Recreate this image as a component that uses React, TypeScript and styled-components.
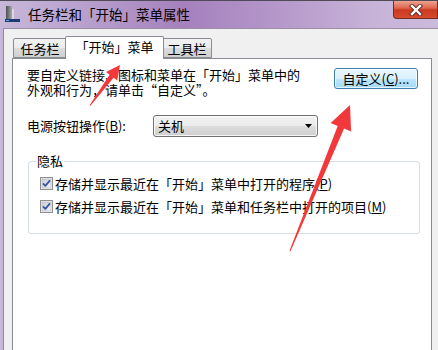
import React from "react";
import styled, { createGlobalStyle } from "styled-components";

const GlobalStyle = createGlobalStyle`
  html, body {
    margin: 0;
    padding: 0;
    overflow: hidden;
    background: #ffffff;
  }
  body {
    font-family: "Noto Sans CJK SC", "Liberation Sans", sans-serif;
    color: #000;
  }
`;

const Window = styled.div`
  position: relative;
  width: 438px;
  height: 350px;
  box-sizing: border-box;
  overflow: hidden;
  display: flex;
  flex-direction: column;
  border-top: 1px solid #4f4a55;
  background: linear-gradient(
    90deg,
    #c7b7d9 0%,
    #b9a2ce 18%,
    #a580bd 42%,
    #b496c9 62%,
    #c7b3d8 85%,
    #cbbadc 100%
  );
`;

const TitleBar = styled.div`
  height: 27px;
  flex-shrink: 0;
  display: flex;
  align-items: flex-start;
`;

const AppIcon = styled.svg`
  margin: 4px 0 0 4px;
  flex-shrink: 0;
`;

const Title = styled.span`
  margin-left: 7px;
  font-size: 13.5px;
  line-height: 27px;
  color: #000;
  white-space: nowrap;
`;

const CloseButton = styled.div`
  margin-left: auto;
  width: 45px;
  height: 18px;
  box-sizing: border-box;
  border: 1px solid #6e2f27;
  border-top: none;
  border-radius: 0 0 0 4px;
  background: linear-gradient(180deg, #eba393 0%, #e0654c 42%, #c93a20 52%, #d84a2c 100%);
  display: flex;
  align-items: center;
  justify-content: center;
`;

const Body = styled.div`
  flex: 1;
  margin-left: 3px;
  border-left: 1px solid #8d8d8d;
  border-top: 1px solid #9b8ea7;
  background: #f0f0f0;
  padding: 7px 6px 0 8px;
  display: flex;
  flex-direction: column;
`;

const TabStrip = styled.div`
  height: 22px;
  padding-left: 1px;
  display: flex;
  align-items: flex-end;
  position: relative;
  z-index: 1;
`;

const Tab = styled.div<{ $active?: boolean; $w: number }>`
  width: ${(p) => p.$w}px;
  height: ${(p) => (p.$active ? 23 : 20)}px;
  box-sizing: border-box;
  margin: ${(p) => (p.$active ? "0 -2px -1px -2px" : "0")};
  border: 1px solid #898c95;
  border-bottom: ${(p) => (p.$active ? "none" : "1px solid #898c95")};
  border-radius: 2px 2px 0 0;
  background: ${(p) =>
    p.$active ? "#ffffff" : "linear-gradient(180deg, #f2f2f2 0%, #ebebeb 50%, #dddddd 51%, #cfcfcf 100%)"};
  position: relative;
  z-index: ${(p) => (p.$active ? 2 : 0)};
  font-size: 13px;
  line-height: ${(p) => (p.$active ? 20 : 19)}px;
  text-align: center;
  white-space: nowrap;
`;

const Panel = styled.div`
  flex: 1;
  background: #ffffff;
  border: 1px solid #898c95;
  border-bottom: none;
  padding: 9px 13px 0 14px;
  display: flex;
  flex-direction: column;
`;

const IntroRow = styled.div`
  display: flex;
  justify-content: space-between;
  align-items: flex-start;
`;

const Intro = styled.p`
  margin: -1px 0 0 0;
  font-size: 13px;
  line-height: 15px;
  white-space: nowrap;
`;

const PushButton = styled.div`
  width: 84px;
  height: 21px;
  box-sizing: border-box;
  border: 1px solid #3c7fb1;
  border-radius: 3px;
  box-shadow: inset 0 0 0 1px rgba(255, 255, 255, 0.7);
  background: linear-gradient(180deg, #eaf6fd 0%, #d9f0fc 50%, #bee6fd 51%, #a7d9f5 100%);
  font-size: 13px;
  line-height: 19px;
  text-align: center;
  white-space: nowrap;
`;

const PowerRow = styled.div`
  margin-top: 18px;
  display: flex;
  align-items: center;
`;

const FieldLabel = styled.span`
  width: 126px;
  font-size: 13px;
  line-height: 22px;
  white-space: nowrap;
`;

const Mnemonic = styled.span`
  text-decoration: underline;
`;

const Select = styled.div`
  width: 165px;
  height: 22px;
  box-sizing: border-box;
  border: 1px solid #707070;
  border-radius: 3px;
  box-shadow: inset 0 0 0 1px rgba(255, 255, 255, 0.8);
  background: linear-gradient(180deg, #f2f2f2 0%, #ebebeb 50%, #dddddd 51%, #cfcfcf 100%);
  padding: 0 5px 0 4px;
  display: flex;
  align-items: center;
  justify-content: space-between;
  font-size: 13px;
  line-height: 20px;
`;

const Group = styled.div`
  position: relative;
  margin: 24px -2px 0 1px;
  border: 1px solid #d5dfe5;
  border-radius: 3px;
  padding: 10px 0 15px 11px;
`;

const Legend = styled.span`
  position: absolute;
  top: -8px;
  left: 7px;
  padding: 0 1px;
  background: #ffffff;
  font-size: 13px;
  line-height: 14px;
`;

const CheckRow = styled.div`
  height: 23px;
  display: flex;
  align-items: center;
  gap: 2px;
  font-size: 13px;
  white-space: nowrap;
`;

const Annotations = styled.svg`
  position: absolute;
  left: 0;
  top: 0;
  pointer-events: none;
  z-index: 10;
`;

const CheckBox = () => (
  <svg width="13" height="13" viewBox="0 0 13 13">
    <defs>
      <linearGradient id="cbfill" x1="0" y1="0" x2="1" y2="1">
        <stop offset="0" stopColor="#c9ced6" />
        <stop offset="1" stopColor="#f4f5f7" />
      </linearGradient>
    </defs>
    <rect x="0.5" y="0.5" width="12" height="12" fill="#f4f4f4" stroke="#8e8f8f" />
    <rect x="2" y="2" width="9" height="9" fill="url(#cbfill)" stroke="#aeb3bb" strokeWidth="0.6" />
    <path d="M3 6.4 L5.3 8.8 L10 3.3" fill="none" stroke="#3a55a0" strokeWidth="1.8" strokeLinejoin="round" />
  </svg>
);

export default function App() {
  return (
    <>
      <GlobalStyle />
      <Window lang="zh-CN">
        <TitleBar>
          <AppIcon width="17" height="18" viewBox="0 0 17 18">
            <defs>
              <linearGradient id="tower" x1="0" y1="0" x2="1" y2="0">
                <stop offset="0" stopColor="#4b4d52" />
                <stop offset="1" stopColor="#a7a9ad" />
              </linearGradient>
            </defs>
            <rect x="2" y="1" width="6" height="14" fill="url(#tower)" />
            <rect x="8" y="4" width="2" height="11" fill="#d9dadc" />
            <rect x="1" y="14" width="15" height="3" fill="#1d3d72" />
            <rect x="2" y="15" width="3" height="1" fill="#57a8e6" />
          </AppIcon>
          <Title>任务栏和「开始」菜单属性</Title>
          <CloseButton>
            <svg width="14" height="12" viewBox="0 0 14 12">
              <path d="M3 2 L11 10 M11 2 L3 10" stroke="#5a2a24" strokeWidth="4.2" strokeLinecap="square" />
              <path d="M3 2 L11 10 M11 2 L3 10" stroke="#ffffff" strokeWidth="2.4" strokeLinecap="square" />
            </svg>
          </CloseButton>
        </TitleBar>
        <Body>
          <TabStrip>
            <Tab $w={54}>任务栏</Tab>
            <Tab $w={99} $active>
              「开始」菜单
            </Tab>
            <Tab $w={50}>工具栏</Tab>
          </TabStrip>
          <Panel>
            <IntroRow>
              <Intro>
                要自定义链接、图标和菜单在「开始」菜单中的
                <br />
                外观和行为，请单击“自定义”。
              </Intro>
              <PushButton>
                自定义(<Mnemonic>C</Mnemonic>)...
              </PushButton>
            </IntroRow>
            <PowerRow>
              <FieldLabel>
                电源按钮操作(<Mnemonic>B</Mnemonic>):
              </FieldLabel>
              <Select>
                <span>关机</span>
                <svg width="7" height="4" viewBox="0 0 7 4">
                  <path d="M0 0 H7 L3.5 4 Z" fill="#000" />
                </svg>
              </Select>
            </PowerRow>
            <Group>
              <Legend>隐私</Legend>
              <CheckRow>
                <CheckBox />
                <span>
                  存储并显示最近在「开始」菜单中打开的程序(<Mnemonic>P</Mnemonic>)
                </span>
              </CheckRow>
              <CheckRow>
                <CheckBox />
                <span>
                  存储并显示最近在「开始」菜单和任务栏中打开的项目(<Mnemonic>M</Mnemonic>)
                </span>
              </CheckRow>
            </Group>
          </Panel>
        </Body>
        <Annotations width="438" height="350" viewBox="0 0 438 350">
          <polygon
            points="89.6,104.3 109.6,73.7 106,71 120,64 117.2,79.4 113.6,76.7 90.4,104.7"
            fill="#f3383b"
          />
          <polygon
            points="289.5,249.8 337.7,124.9 330.7,122 350,104 351.1,130.4 344.1,127.5 290.5,250.2"
            fill="#f3383b"
          />
        </Annotations>
      </Window>
    </>
  );
}
